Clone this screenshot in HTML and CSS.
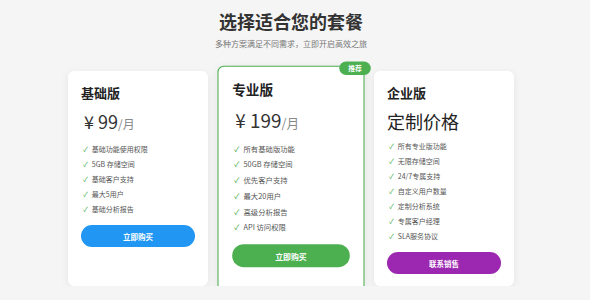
FILE: index.html
```html
<!DOCTYPE html>
<html lang="zh-CN">
<head>
    <meta charset="UTF-8">
    <meta name="viewport" content="width=device-width, initial-scale=1.0">
    <title>选择适合您的套餐</title>
    <link rel="stylesheet" href="styles.css">
</head>
<body>
    <div class="page">
        <h1 class="titulo">选择适合您的套餐</h1>
        <p class="subtitulo">多种方案满足不同需求，立即开启高效之旅</p>

        <div class="planos">
            <div class="plano">
                <h3>基础版</h3>
                <p class="preco"><span class="moeda">¥</span>99<span class="unidade">/月</span></p>
                <ul class="lista">
                    <li>基础功能使用权限</li>
                    <li>5GB 存储空间</li>
                    <li>基础客户支持</li>
                    <li>最大5用户</li>
                    <li>基础分析报告</li>
                </ul>
                <button class="botao azul">立即购买</button>
            </div>

            <div class="plano destaque">
                <span class="selo">推荐</span>
                <h3>专业版</h3>
                <p class="preco"><span class="moeda">¥</span>199<span class="unidade">/月</span></p>
                <ul class="lista">
                    <li>所有基础版功能</li>
                    <li>50GB 存储空间</li>
                    <li>优先客户支持</li>
                    <li>最大20用户</li>
                    <li>高级分析报告</li>
                    <li>API 访问权限</li>
                </ul>
                <button class="botao verde">立即购买</button>
            </div>

            <div class="plano">
                <h3>企业版</h3>
                <p class="preco custom">定制价格</p>
                <ul class="lista">
                    <li>所有专业版功能</li>
                    <li>无限存储空间</li>
                    <li>24/7专属支持</li>
                    <li>自定义用户数量</li>
                    <li>定制分析系统</li>
                    <li>专属客户经理</li>
                    <li>SLA服务协议</li>
                </ul>
                <button class="botao roxo">联系销售</button>
            </div>
        </div>
    </div>
</body>
</html>
```

FILE: styles.css
```css
*{
    margin: 0;
    padding: 0;
    box-sizing: border-box;
}
body{
    background-color: #f5f5f5;
    font-family: "Noto Sans CJK SC", "Noto Sans", sans-serif;
    color: #333;
}
.page{
    padding: 8px 8px 0 0;
    text-align: center;
}
.titulo{
    font-size: 18px;
    line-height: 26px;
    font-weight: bold;
    color: #333;
}
.subtitulo{
    margin-top: 4px;
    font-size: 8px;
    line-height: 12px;
    color: #777;
}
.planos{
    display: flex;
    justify-content: center;
    gap: 13px;
    margin-top: 21px;
}
.plano{
    position: relative;
    width: 140px;
    background-color: #fff;
    border-radius: 6px;
    padding: 14px 13px 12px;
    box-shadow: 0 2px 8px rgba(0, 0, 0, 0.07);
    text-align: left;
}
.plano h3{
    font-size: 13px;
    line-height: 16px;
    font-weight: bold;
    color: #222;
}
.preco{
    margin-top: 8px;
    font-size: 18px;
    line-height: 24px;
    color: #333;
    padding-left: 3px;
}
.moeda{
    margin-right: 4px;
}
.unidade{
    font-size: 12px;
    color: #888;
}
.preco.custom{
    font-size: 18px;
    padding-left: 0;
    color: #222;
}
.lista{
    list-style: none;
    margin-top: 6px;
}
.lista li{
    font-size: 7px;
    line-height: 15px;
    color: #555;
    padding-left: 2px;
}
.lista li::before{
    content: "✓";
    color: #4caf50;
    margin-right: 4px;
}
.botao{
    display: block;
    width: 100%;
    height: 22px;
    margin-top: 8px;
    border: none;
    border-radius: 11px;
    color: #fff;
    font-family: inherit;
    font-size: 7.5px;
    font-weight: bold;
    cursor: pointer;
}
.azul{
    background-color: #2196f3;
}
.verde{
    background-color: #4caf50;
}
.roxo{
    background-color: #9c27b0;
}
.destaque{
    border: 1px solid #4caf50;
    transform: scale(1.05);
}
.selo{
    position: absolute;
    top: -5px;
    right: -7px;
    width: 30px;
    height: 13px;
    border-radius: 7px;
    background-color: #4caf50;
    color: #fff;
    font-size: 6.5px;
    font-weight: bold;
    line-height: 13px;
    text-align: center;
}
```
